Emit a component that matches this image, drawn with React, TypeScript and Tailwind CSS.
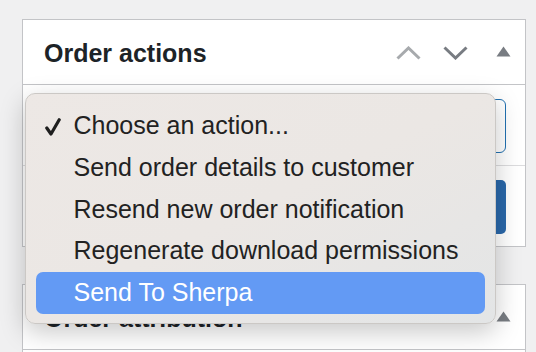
import React from "react";

const font = { fontFamily: '"Liberation Sans", Arial, sans-serif' };

function Up({ color }: { color: string }) {
  return (
    <svg width="25" height="14" viewBox="0 0 25 14" fill="none">
      <path d="M1.5 12.5 L12.5 2 L23.5 12.5" stroke={color} strokeWidth="3" />
    </svg>
  );
}
function Down({ color }: { color: string }) {
  return (
    <svg width="25" height="14" viewBox="0 0 25 14" fill="none">
      <path d="M1.5 1.5 L12.5 12 L23.5 1.5" stroke={color} strokeWidth="3" />
    </svg>
  );
}
function Tri() {
  return (
    <svg width="15" height="11" viewBox="0 0 15 11">
      <path d="M7.5 0.5 L14.5 10.5 L0.5 10.5 Z" fill="#787c82" />
    </svg>
  );
}

function Header({ title, arrows }: { title: string; arrows: boolean }) {
  return (
    <div className="h-[65px] border-b border-[#c3c4c7] flex items-center pl-[21px] pr-[14px] pt-[2px]">
      <div className="text-[25px] leading-[25px] font-bold text-[#1d2327]">{title}</div>
      <div className="ml-auto flex items-center">
        {arrows && (
          <>
            <Up color="#a7aaad" />
            <div className="w-[22px]" />
            <Down color="#787c82" />
            <div className="w-[28px]" />
          </>
        )}
        <div className="-mt-[4px]">
          <Tri />
        </div>
      </div>
    </div>
  );
}

const items = [
  "Choose an action...",
  "Send order details to customer",
  "Resend new order notification",
  "Regenerate download permissions",
  "Send To Sherpa",
];

export default function App() {
  return (
    <div className="relative w-[536px] h-[352px] overflow-hidden bg-[#f0f0f1] pt-[19px] pl-[22px]" style={font}>
      <div className="w-[504px] border border-[#c3c4c7] bg-white">
        <Header title="Order actions" arrows={true} />
        <div className="h-[81px] border-b border-[#dcdcde] pt-[14px] pl-[18px] pr-[19px]">
          <div className="h-[54px] rounded-[6px] border border-[#2271b1] bg-white" />
        </div>
        <div className="h-[80px] pt-[14px] pl-[18px] pr-[19px] flex items-start">
          <div className="ml-auto h-[54px] w-[130px] rounded-[5px] bg-[#2a68aa]" />
        </div>
      </div>
      <div className="mt-[37px] w-[504px] border border-[#c3c4c7] bg-white">
        <Header title="Order attribution" arrows={false} />
        <div className="h-[40px]" />
      </div>

      <div className="absolute left-[25px] top-[93px] w-[471px] h-[231px] rounded-[10px] border border-[#cbc8c5] bg-linear-to-br from-[#ede8e5] via-[#ebe7e4] to-[#e3e5e6] shadow-[0_8px_26px_rgba(0,0,0,0.22)] pt-[11.3px] px-[10px]">
        {items.map((t, i) => {
          const sel = i === items.length - 1;
          return (
            <div
              key={t}
              className={
                "relative h-[41.67px] leading-[41.67px] pl-[37.5px] text-[25px] whitespace-nowrap rounded-[7px] " +
                (sel ? "bg-[#639af4] text-white" : "text-[#222222]")
              }
            >
              {i === 0 && (
                <svg className="absolute left-[8.5px] top-[12.5px]" width="16" height="18" viewBox="0 0 16 18" fill="none">
                  <path d="M1.8 10 L6 16 L14.2 1.8" stroke="#1f1f1f" strokeWidth="3.2" strokeLinecap="round" strokeLinejoin="round" />
                </svg>
              )}
              {t}
            </div>
          );
        })}
      </div>
    </div>
  );
}
